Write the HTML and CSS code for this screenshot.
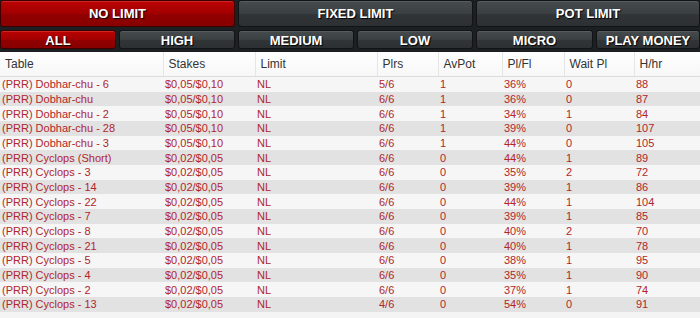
FILE: index.html
```html
<!DOCTYPE html>
<html lang="en">
<head>
    <meta charset="UTF-8">
    <title>Lobby</title>
    <link rel="stylesheet" href="styles.css">
</head>
<body>
    <div class="tabs">
        <div class="limit-tabs">
            <a class="tab active">NO LIMIT</a>
            <a class="tab">FIXED LIMIT</a>
            <a class="tab">POT LIMIT</a>
        </div>
        <div class="stake-tabs">
            <a class="tab active">ALL</a>
            <a class="tab">HIGH</a>
            <a class="tab">MEDIUM</a>
            <a class="tab">LOW</a>
            <a class="tab">MICRO</a>
            <a class="tab">PLAY MONEY</a>
        </div>
    </div>

    <table class="lobby">
        <colgroup>
            <col class="c-table"><col class="c-stakes"><col class="c-limit"><col class="c-plrs">
            <col class="c-avpot"><col class="c-plfl"><col class="c-wait"><col class="c-hhr">
        </colgroup>
        <thead>
            <tr>
                <th>Table</th><th>Stakes</th><th>Limit</th><th>Plrs</th>
                <th>AvPot</th><th>Pl/Fl</th><th>Wait Pl</th><th>H/hr</th>
            </tr>
        </thead>
        <tbody>
            <tr><td>(PRR) Dobhar-chu - 6</td><td>$0,05/$0,10</td><td>NL</td><td>5/6</td><td>1</td><td>36%</td><td>0</td><td>88</td></tr>
            <tr><td>(PRR) Dobhar-chu</td><td>$0,05/$0,10</td><td>NL</td><td>6/6</td><td>1</td><td>36%</td><td>0</td><td>87</td></tr>
            <tr><td>(PRR) Dobhar-chu - 2</td><td>$0,05/$0,10</td><td>NL</td><td>6/6</td><td>1</td><td>34%</td><td>1</td><td>84</td></tr>
            <tr><td>(PRR) Dobhar-chu - 28</td><td>$0,05/$0,10</td><td>NL</td><td>6/6</td><td>1</td><td>39%</td><td>0</td><td>107</td></tr>
            <tr><td>(PRR) Dobhar-chu - 3</td><td>$0,05/$0,10</td><td>NL</td><td>6/6</td><td>1</td><td>44%</td><td>0</td><td>105</td></tr>
            <tr><td>(PRR) Cyclops (Short)</td><td>$0,02/$0,05</td><td>NL</td><td>6/6</td><td>0</td><td>44%</td><td>1</td><td>89</td></tr>
            <tr><td>(PRR) Cyclops - 3</td><td>$0,02/$0,05</td><td>NL</td><td>6/6</td><td>0</td><td>35%</td><td>2</td><td>72</td></tr>
            <tr><td>(PRR) Cyclops - 14</td><td>$0,02/$0,05</td><td>NL</td><td>6/6</td><td>0</td><td>39%</td><td>1</td><td>86</td></tr>
            <tr><td>(PRR) Cyclops - 22</td><td>$0,02/$0,05</td><td>NL</td><td>6/6</td><td>0</td><td>44%</td><td>1</td><td>104</td></tr>
            <tr><td>(PRR) Cyclops - 7</td><td>$0,02/$0,05</td><td>NL</td><td>6/6</td><td>0</td><td>39%</td><td>1</td><td>85</td></tr>
            <tr><td>(PRR) Cyclops - 8</td><td>$0,02/$0,05</td><td>NL</td><td>6/6</td><td>0</td><td>40%</td><td>2</td><td>70</td></tr>
            <tr><td>(PRR) Cyclops - 21</td><td>$0,02/$0,05</td><td>NL</td><td>6/6</td><td>0</td><td>40%</td><td>1</td><td>78</td></tr>
            <tr><td>(PRR) Cyclops - 5</td><td>$0,02/$0,05</td><td>NL</td><td>6/6</td><td>0</td><td>38%</td><td>1</td><td>95</td></tr>
            <tr><td>(PRR) Cyclops - 4</td><td>$0,02/$0,05</td><td>NL</td><td>6/6</td><td>0</td><td>35%</td><td>1</td><td>90</td></tr>
            <tr><td>(PRR) Cyclops - 2</td><td>$0,02/$0,05</td><td>NL</td><td>6/6</td><td>0</td><td>37%</td><td>1</td><td>74</td></tr>
            <tr><td>(PRR) Cyclops - 13</td><td>$0,02/$0,05</td><td>NL</td><td>4/6</td><td>0</td><td>54%</td><td>0</td><td>91</td></tr>
        </tbody>
    </table>
</body>
</html>
```

FILE: styles.css
```css
/* General Styles */
body {
    margin: 0;
    padding: 0;
    background-color: #f4f4f4;
    font-family: "Liberation Sans", Arial, sans-serif;
    overflow: hidden;
}

/* Tab bars */
.tabs {
    background-color: #1d2022;
    padding-bottom: 3px;
}
.limit-tabs {
    display: grid;
    grid-template-columns: 235px 235px 1fr;
    gap: 3px;
    height: 27px;
    margin-bottom: 3px;
}
.stake-tabs {
    display: grid;
    grid-template-columns: 116px 116px 116px 116px 117px 1fr;
    gap: 3px;
    height: 19px;
}
.tab {
    display: flex;
    align-items: center;
    justify-content: center;
    color: white;
    font-weight: bold;
    font-size: 13px;
    text-shadow: 1px 1px 1px #000;
    background: linear-gradient(#464b4f, #3a3f42 50%, #313538 51%, #2c3033);
    border: 1px solid #111314;
    border-radius: 3px;
    box-shadow: inset 0 1px 0 rgba(255, 255, 255, 0.1);
    cursor: pointer;
}
.stake-tabs .tab {
    padding-top: 1px;
}
.tab.active {
    background: linear-gradient(#bb0303, #a20000 50%, #920000 51%, #880000);
    border-color: #3a0000;
    box-shadow: inset 0 1px 0 rgba(255, 120, 120, 0.3);
}

/* Table list */
.lobby {
    width: 700px;
    border-collapse: collapse;
    table-layout: fixed;
}
.c-table { width: 163px; }
.c-stakes { width: 92px; }
.c-limit { width: 122px; }
.c-plrs { width: 61px; }
.c-avpot { width: 64px; }
.c-plfl { width: 62px; }
.c-wait { width: 70px; }
.c-hhr { width: 66px; }

.lobby th {
    height: 24px;
    padding: 0 0 0 5px;
    text-align: left;
    font-weight: normal;
    font-size: 12px;
    color: #333;
    background: linear-gradient(#ffffff, #f7f7f7);
    border-right: 1px solid #e6e6e6;
    border-bottom: 1px solid #dcdcdc;
}
.lobby td {
    height: 14.67px;
    padding: 0 0 0 2px;
    font-size: 11px;
    line-height: 14px;
    color: #b0262c;
    white-space: nowrap;
    overflow: hidden;
}
.lobby tbody tr:nth-child(odd) {
    background-color: #f6f6f6;
}
.lobby tbody tr:nth-child(even) {
    background-color: #e2e2e2;
}
```
